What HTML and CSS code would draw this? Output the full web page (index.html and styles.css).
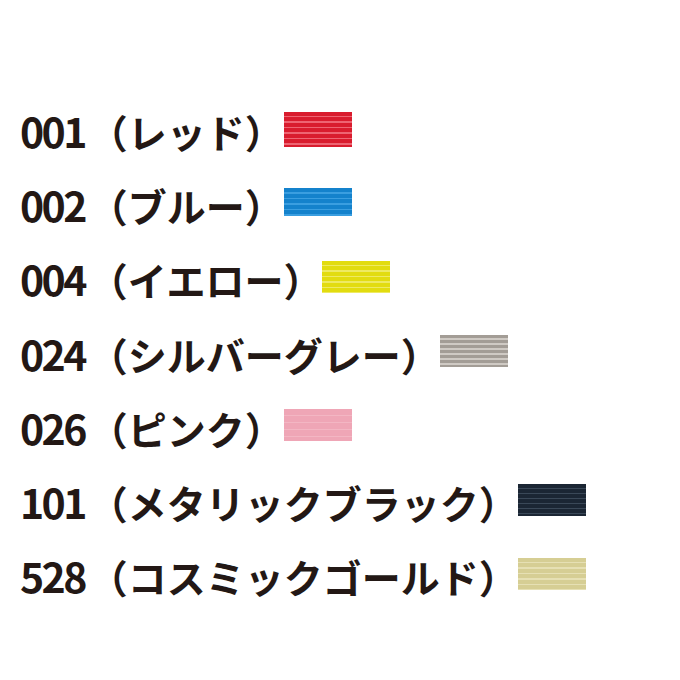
FILE: index.html
```html
<!DOCTYPE html>
<html lang="ja">
<head>
<meta charset="utf-8">
<title>カラー</title>
<link rel="stylesheet" href="styles.css">
</head>
<body>
<ul class="colors">
  <li class="row"><span class="label"><span class="num">001</span>（レッド）</span><span class="swatch red tall"></span></li>
  <li class="row"><span class="label"><span class="num">002</span>（ブルー）</span><span class="swatch blue short"></span></li>
  <li class="row"><span class="label"><span class="num">004</span>（イエロー）</span><span class="swatch yellow"></span></li>
  <li class="row"><span class="label"><span class="num">024</span>（シルバーグレー）</span><span class="swatch silver"></span></li>
  <li class="row"><span class="label"><span class="num">026</span>（ピンク）</span><span class="swatch pink"></span></li>
  <li class="row"><span class="label"><span class="num">101</span>（メタリックブラック）</span><span class="swatch black"></span></li>
  <li class="row"><span class="label"><span class="num">528</span>（コスミックゴールド）</span><span class="swatch gold"></span></li>
</ul>
</body>
</html>
```
FILE: styles.css
```css
html, body {
  margin: 0;
  padding: 0;
  background: #ffffff;
}
body {
  width: 680px;
  height: 680px;
  overflow: hidden;
}
.colors {
  list-style: none;
  margin: 0;
  padding: 93px 0 0 20px;
  display: flex;
  flex-direction: column;
}
.row {
  height: 74.3px;
  display: flex;
  align-items: center;
}
.label {
  font-family: "Noto Sans CJK JP", "Noto Sans", sans-serif;
  font-weight: 700;
  font-size: 39px;
  line-height: 1;
  color: #231815;
  white-space: nowrap;
}
.num {
  font-size: 41px;
  letter-spacing: -2.6px;
  margin-right: 4px;
}
.swatch {
  display: block;
  width: 68px;
  height: 32px;
  margin-top: -4px;
}
.swatch.tall { height: 35px; margin-top: -2px; }
.swatch.short { height: 28px; }
.red {
  background: repeating-linear-gradient(to bottom,
    #d91c2e 0px, #d91c2e 4px, #ee6472 4px, #ee6472 5.5px);
}
.blue {
  background: repeating-linear-gradient(to bottom,
    #1482cc 0px, #1482cc 4px, #3a9ee0 4px, #3a9ee0 5.5px);
}
.yellow {
  background: repeating-linear-gradient(to bottom,
    #e2dc10 0px, #e2dc10 4px, #eeea62 4px, #eeea62 5.5px);
}
.silver {
  background: repeating-linear-gradient(to bottom,
    #a39d96 0px, #a39d96 3px, #cfcac4 3px, #cfcac4 5px);
}
.pink {
  background: repeating-linear-gradient(to bottom,
    #efa6b6 0px, #efa6b6 6px, #f3b6c3 6px, #f3b6c3 7px);
}
.black {
  background: repeating-linear-gradient(to bottom,
    #1b2634 0px, #1b2634 4px, #3a4858 4px, #3a4858 5px);
}
.gold {
  background: repeating-linear-gradient(to bottom,
    #d6ce94 0px, #d6ce94 4px, #e6e0b4 4px, #e6e0b4 5.5px);
}
```
